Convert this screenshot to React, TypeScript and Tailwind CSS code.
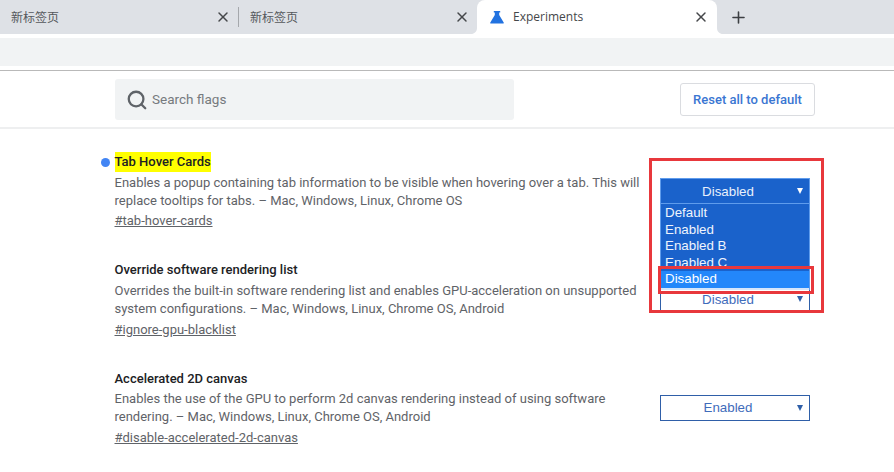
import { Search, X, Plus } from "lucide-react";

const experiments = [
  {
    title: "Tab Hover Cards",
    active: true,
    lines: [
      "Enables a popup containing tab information to be visible when hovering over a tab. This will",
      "replace tooltips for tabs. – Mac, Windows, Linux, Chrome OS",
    ],
    link: "#tab-hover-cards",
    value: "Disabled",
    spacing: "h-[108px]",
    descTop: "mt-[3px]",
    linkTop: "mt-[2px]",
    valueTop: "pt-[1px]",
  },
  {
    title: "Override software rendering list",
    active: false,
    lines: [
      "Overrides the built-in software rendering list and enables GPU-acceleration on unsupported",
      "system configurations. – Mac, Windows, Linux, Chrome OS, Android",
    ],
    link: "#ignore-gpu-blacklist",
    value: "Disabled",
    spacing: "h-[109px]",
    descTop: "mt-[3px]",
    linkTop: "mt-[3px]",
    valueTop: "pt-[1px]",
  },
  {
    title: "Accelerated 2D canvas",
    active: false,
    lines: [
      "Enables the use of the GPU to perform 2d canvas rendering instead of using software",
      "rendering. – Mac, Windows, Linux, Chrome OS, Android",
    ],
    link: "#disable-accelerated-2d-canvas",
    value: "Enabled",
    spacing: "h-[90px]",
    descTop: "mt-[2px]",
    linkTop: "mt-[3px]",
    valueTop: "pt-0",
  },
];

const options = ["Default", "Enabled", "Enabled B", "Enabled C"];

function Tab({ label, active }: { label: string; active?: boolean }) {
  if (active) {
    return (
      <div className="relative flex h-[34px] w-[240px] items-center rounded-t-[8px] bg-white pl-[13px] pr-[8px]">
        <svg viewBox="0 0 14 14" className="absolute bottom-0 left-[-6px] h-[6px] w-[6px]" fill="#ffffff">
          <path d="M14 0v14H0C8 14 14 8 14 0z" />
        </svg>
        <svg viewBox="0 0 14 14" className="absolute bottom-0 right-[-6px] h-[6px] w-[6px]" fill="#ffffff">
          <path d="M0 0v14h14C6 14 0 8 0 0z" />
        </svg>
        <svg viewBox="0 0 14 14" className="mr-[9px] h-[14px] w-[14px] text-[#2272e0]" fill="currentColor">
          <path d="M3.800 1h6.400v1.400H9.200V5l4.500 7.500c.3.600 0 1.100-.7 1.100H1c-.7 0-1-.5-.7-1.100L4.800 5V2.400h-1z" />
        </svg>
        <span className="flex-1 font-['Open_Sans',sans-serif] text-[12px] text-[#45474a]">{label}</span>
        <X className="h-[16px] w-[16px] text-[#45474a]" strokeWidth={2.2} />
      </div>
    );
  }
  return (
    <div className="flex h-[34px] w-[238px] items-center pl-[11px] pr-[7px]">
      <span className="flex-1 font-['Noto_Sans_CJK_SC',sans-serif] text-[12px] text-[#55585c]">{label}</span>
      <X className="h-[16px] w-[16px] text-[#45474a]" strokeWidth={2.2} />
    </div>
  );
}

function FlagSelect({ value, open, valueTop }: { value: string; open?: boolean; valueTop: string }) {
  return (
    <div
      className={`relative flex h-[26px] w-[150px] items-center justify-center border font-['Liberation_Sans',sans-serif] text-[13.33px] ${valueTop} ${
        open
          ? "border-[#5f9cec] bg-[#1a62cb] text-[#e8f0fb]"
          : "border-[#2f5fa8] bg-white text-[#3f6cbb]"
      }`}
    >
      <span className="pr-[14px]">{value}</span>
      <svg viewBox="0 0 7 7" className={`absolute right-[6px] top-[9px] h-[6px] w-[6px] ${open ? "text-white" : "text-[#2f5fa8]"}`} fill="currentColor">
        <path d="M0 0h7L3.500 7z" />
      </svg>
    </div>
  );
}

export default function App() {
  return (
    <div className="h-[472px] w-[894px] overflow-hidden bg-white font-['Roboto',sans-serif]">
      <div className="flex h-[34px] bg-[#dee1e6]">
        <Tab label="新标签页" />
        <div className="mt-[7px] h-[20px] w-px bg-[#a5a8ac]" />
        <Tab label="新标签页" />
        <Tab label="Experiments" active />
        <div className="flex w-[43px] items-center justify-center">
          <Plus className="h-[19px] w-[19px] text-[#3c3f43]" strokeWidth={2} />
        </div>
      </div>

      <div className="mt-[4px] h-[28px] bg-[#f1f3f4]" />
      <div className="mt-[4px] h-[1px] bg-[#b9b9b9]" />

      <div className="flex h-[58px] items-start justify-between border-b-2 border-[#eeeff0] pl-[115px] pr-[79px] pt-[8px]">
        <div className="flex h-[41px] w-[399px] items-center rounded-[3px] bg-[#f1f3f4] pl-[11px]">
          <Search className="h-[22px] w-[22px] text-[#5f6368]" strokeWidth={2.5} />
          <span className="ml-[4px] text-[13.5px] text-[#767a7e]">Search flags</span>
        </div>
        <div className="mt-[4px] flex h-[33px] w-[135px] items-center justify-center rounded-[3px] border border-[#dadce0] text-[13px] font-medium text-[#3a76d2]">
          Reset all to default
        </div>
      </div>

      <div className="relative pl-[114.5px] pr-[84px] pt-[24px]">
        {experiments.map((exp) => (
          <div key={exp.title} className={`relative flex justify-between ${exp.spacing}`}>
            <div>
              <div className="flex h-[18px] items-center text-[13px] font-medium text-[#202124]">
                {exp.active && (
                  <span className="absolute left-[-13.5px] top-[5px] h-[9px] w-[9px] rounded-full bg-[#4285f4]" />
                )}
                <span className={exp.active ? "bg-[#ffff00]" : ""}>{exp.title}</span>
              </div>
              <div className={`${exp.descTop} text-[13px] leading-[18px] text-[#5f6368]`}>
                {exp.lines.map((l) => (
                  <div key={l} className="whitespace-nowrap">
                    {l}
                  </div>
                ))}
              </div>
              <div className={`${exp.linkTop} text-[13px] leading-[18px] text-[#5f6368] underline`}>{exp.link}</div>
            </div>
            <div className="mt-[25px]">
              <FlagSelect value={exp.value} open={exp.active} valueTop={exp.valueTop} />
            </div>
          </div>
        ))}

        {/* open dropdown list */}
        <div className="absolute left-[660px] top-[75px] w-[150px] border-x border-[#5f9cec] bg-[#1a62cb] pt-[1px] font-['Liberation_Sans',sans-serif] text-[13.33px] leading-[16.5px] text-[#eef4fd]">
          {options.map((o) => (
            <div key={o} className="pl-[4px]">
              {o}
            </div>
          ))}
          <div className="bg-[#2387fa] pl-[4px] text-white">Disabled</div>
          <div className="h-[2px] bg-[#d5e6fb]" />
        </div>

        {/* red annotation boxes */}
        <div className="absolute left-[649px] top-[29px] h-[155px] w-[175px] border-[3px] border-[#e8383c]" />
        <div className="absolute left-[658px] top-[137px] h-[28px] w-[156px] border-[3px] border-[#e8383c]" />
      </div>
    </div>
  );
}
